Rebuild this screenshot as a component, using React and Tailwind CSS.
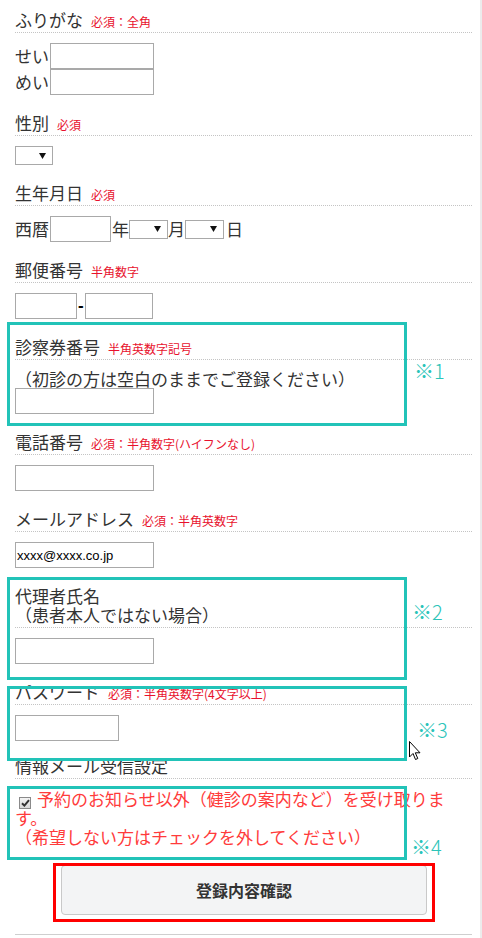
import React from "react";

const jp = { fontFamily: '"Noto Sans CJK JP", "Noto Sans", sans-serif' };

// Section label with dotted underline and optional red note
const Label = ({ children, note }) => (
  <div className="border-b border-dotted border-[#c4c4c4] pb-[3px] text-[17px] leading-[19px] text-[#333]">
    {children}
    {note && (
      <span className="ml-[8px] text-[12px] leading-none text-[#e8112d]">{note}</span>
    )}
  </div>
);

const TextInput = ({ className = "", ...props }) => (
  <input
    type="text"
    className={`block h-[26px] border border-[#a9a9a9] bg-white px-[1px] text-[13px] text-black outline-none ${className}`}
    style={{ fontFamily: '"Liberation Sans", Arial, sans-serif' }}
    {...props}
  />
);

// Small fake select box with black arrow
const Select = ({ className = "" }) => (
  <div
    className={`flex h-[19px] items-center justify-end border border-[#a9a9a9] bg-white pr-[6px] ${className}`}
  >
    <svg width="7" height="6" viewBox="0 0 7 6">
      <polygon points="0,0 7,0 3.5,6" fill="#111" />
    </svg>
  </div>
);

// Teal annotation frame
const Frame = ({ className }) => (
  <div className={`pointer-events-none absolute border-[3px] border-[#22c3b8] ${className}`} />
);

const Mark = ({ className, children }) => (
  <div
    className={`absolute text-[20px] font-light leading-[24px] text-[#2bc4b9] ${className}`}
  >
    {children}
  </div>
);

export default function App() {
  return (
    <div className="relative flex h-[938px] w-[482px] overflow-hidden bg-white" style={jp}>
      {/* Form content */}
      <div className="w-[480px] pl-[15px] pr-[8px] pt-[10px]">
        {/* ふりがな */}
        <Label note="必須：全角">ふりがな</Label>
        <div className="mt-[10px] text-[17px] leading-[26px] text-[#333]">
          <div className="flex h-[26px] items-center">
            <span className="w-[35px]">せい</span>
            <TextInput className="w-[104px]" />
          </div>
          <div className="flex h-[26px] items-center">
            <span className="w-[35px]">めい</span>
            <TextInput className="w-[104px]" />
          </div>
        </div>

        {/* 性別 */}
        <div className="mt-[18px]">
          <Label note="必須">性別</Label>
          <div className="mt-[10px]">
            <Select className="w-[38px]" />
          </div>
        </div>

        {/* 生年月日 */}
        <div className="mt-[18px]">
          <Label note="必須">生年月日</Label>
          <div className="mt-[10px] flex h-[26px] items-center text-[17px] leading-[26px] text-[#333]">
            <span>西暦</span>
            <TextInput className="ml-[1px] w-[61px]" />
            <span className="ml-[1px]">年</span>
            <Select className="w-[39px]" />
            <span>月</span>
            <Select className="w-[39px]" />
            <span className="ml-[2px]">日</span>
          </div>
        </div>

        {/* 郵便番号 */}
        <div className="mt-[18px]">
          <Label note="半角数字">郵便番号</Label>
          <div className="mt-[10px] flex h-[26px] items-center">
            <TextInput className="w-[62px]" />
            <span
              className="px-[1px] text-[17px] font-bold leading-[26px] text-black"
              style={{ fontFamily: '"Liberation Sans", Arial, sans-serif' }}
            >
              -
            </span>
            <TextInput className="w-[68px]" />
          </div>
        </div>

        {/* 診察券番号 */}
        <div className="mt-[18px]">
          <Label note="半角英数字記号">診察券番号</Label>
          <div className="mt-[10px]">
            <div className="text-[17px] leading-[18px] text-[#333]">
              （初診の方は空白のままでご登録ください）
            </div>
            <TextInput className="w-[139px]" />
          </div>
        </div>

        {/* 電話番号 */}
        <div className="mt-[18px]">
          <Label note="必須：半角数字(ハイフンなし)">電話番号</Label>
          <div className="mt-[10px]">
            <TextInput className="w-[139px]" />
          </div>
        </div>

        {/* メールアドレス */}
        <div className="mt-[18px]">
          <Label note="必須：半角英数字">メールアドレス</Label>
          <div className="mt-[10px]">
            <TextInput className="w-[139px]" defaultValue="xxxx@xxxx.co.jp" />
          </div>
        </div>

        {/* 代理者氏名 */}
        <div className="mt-[18px]">
          <Label>
            代理者氏名
            <br />
            （患者本人ではない場合）
          </Label>
          <div className="mt-[10px]">
            <TextInput className="w-[139px]" />
          </div>
        </div>

        {/* パスワード */}
        <div className="mt-[18px]">
          <Label note="必須：半角英数字(4文字以上)">パスワード</Label>
          <div className="mt-[10px]">
            <TextInput className="w-[104px]" />
          </div>
        </div>

        {/* 情報メール受信設定 */}
        <div className="mt-[15px]">
          <Label>情報メール受信設定</Label>
          <div className="mt-[10px] text-[17px] leading-[19px] text-[#ff3b3b]">
            <span className="ml-[4px] mr-[6px] inline-flex h-[12px] w-[12px] translate-y-[1px] items-center justify-center border border-[#8a8a8a] bg-gradient-to-b from-[#f4f4f4] to-[#d8d8d8] align-baseline">
              <svg width="9" height="8" viewBox="0 0 9 8">
                <path d="M1 4.2 L3.4 6.6 L8 1.2" fill="none" stroke="#333" strokeWidth="2" />
              </svg>
            </span>
            予約のお知らせ以外（健診の案内など）を受け取りま
            <br />
            す。
            <br />
            （希望しない方はチェックを外してください）
          </div>
        </div>

        {/* 登録ボタン */}
        <button className="ml-[46px] mt-[19px] block h-[50px] w-[366px] rounded-[4px] border border-[#c9c9c9] bg-[#f3f4f5] text-[16px] font-bold text-[#333]">
          登録内容確認
        </button>

        <div className="mt-[19px] border-t border-[#cfcfcf]" />
      </div>

      {/* Right edge strip */}
      <div className="w-[2px] bg-[#ececec]" />

      {/* Annotation overlays */}
      <Frame className="left-[7px] top-[322px] h-[104px] w-[400px]" />
      <Frame className="left-[7px] top-[577px] h-[103px] w-[400px]" />
      <Frame className="left-[7px] top-[686px] h-[75px] w-[400px]" />
      <Frame className="left-[7px] top-[786px] h-[74px] w-[400px]" />
      <div className="pointer-events-none absolute left-[53px] top-[863px] h-[59px] w-[382px] border-[3px] border-[#ff0000]" />

      <Mark className="left-[414px] top-[359px]">※1</Mark>
      <Mark className="left-[412px] top-[600px]">※2</Mark>
      <Mark className="left-[417px] top-[718px]">※3</Mark>
      <Mark className="left-[411px] top-[835px]">※4</Mark>

      {/* Mouse cursor */}
      <svg
        className="absolute left-[409px] top-[741px]"
        width="12"
        height="20"
        viewBox="0 0 12 20"
      >
        <path
          d="M0.5 0.5 L0.5 16 L4 12.5 L6.5 18.5 L8.8 17.5 L6.3 11.8 L11 11.8 Z"
          fill="#fff"
          stroke="#000"
          strokeWidth="1"
          strokeLinejoin="round"
        />
      </svg>
    </div>
  );
}
